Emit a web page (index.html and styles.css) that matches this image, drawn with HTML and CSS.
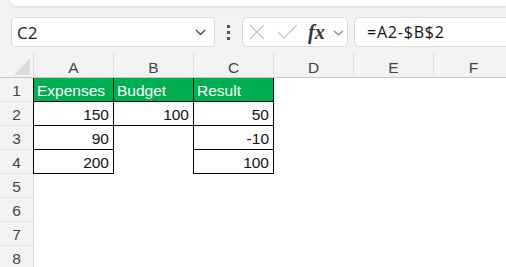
FILE: index.html
```html
<!DOCTYPE html>
<html lang="en">
<head>
  <meta charset="UTF-8" />
  <title>Book1 - Excel</title>
  <link rel="stylesheet" href="styles.css">
</head>
<body>

  <!-- Ribbon edge -->
  <div class="ribbon-edge"></div>

  <!-- Formula bar -->
  <div class="formula-bar">
    <div class="name-box">
      <span>C2</span>
      <svg class="chev" width="11" height="7" viewBox="0 0 11 7"><path d="M1 1 L5.5 5.5 L10 1" fill="none" stroke="#444" stroke-width="1.3"/></svg>
    </div>
    <div class="grip"><i></i><i></i><i></i></div>
    <div class="fx-box">
      <svg class="cancel" width="16" height="16" viewBox="0 0 16 16"><path d="M1 1 L15 15 M15 1 L1 15" stroke="#c4c4c4" stroke-width="1.2"/></svg>
      <svg class="enter" width="21" height="16" viewBox="0 0 21 16"><path d="M1 8 L7 14 L20 1" fill="none" stroke="#c4c4c4" stroke-width="1.2"/></svg>
      <span class="fx">fx</span>
      <svg class="chev-sm" width="11" height="6" viewBox="0 0 11 6"><path d="M1 1 L5.5 5 L10 1" fill="none" stroke="#888" stroke-width="1.1"/></svg>
    </div>
    <div class="formula-input">=A2-$B$2</div>
  </div>

  <!-- Sheet grid -->
  <div class="sheet">
    <div class="corner"><svg width="16" height="17" viewBox="0 0 16 17"><path d="M16 0 L16 17 L0 17 Z" fill="#dcdcdc"/></svg></div>
    <div class="col-head">A</div>
    <div class="col-head">B</div>
    <div class="col-head">C</div>
    <div class="col-head">D</div>
    <div class="col-head">E</div>
    <div class="col-head">F</div>

    <div class="row-head">1</div>
    <div class="cell box edge title">Expenses</div>
    <div class="cell box title">Budget</div>
    <div class="cell box edge title">Result</div>
    <div class="cell"></div><div class="cell"></div><div class="cell"></div>

    <div class="row-head">2</div>
    <div class="cell box edge num">150</div>
    <div class="cell box num">100</div>
    <div class="cell box edge num">50</div>
    <div class="cell"></div><div class="cell"></div><div class="cell"></div>

    <div class="row-head">3</div>
    <div class="cell box edge num">90</div>
    <div class="cell"></div>
    <div class="cell box edge num">-10</div>
    <div class="cell"></div><div class="cell"></div><div class="cell"></div>

    <div class="row-head">4</div>
    <div class="cell box edge num">200</div>
    <div class="cell"></div>
    <div class="cell box edge num">100</div>
    <div class="cell"></div><div class="cell"></div><div class="cell"></div>

    <div class="row-head">5</div>
    <div class="cell"></div><div class="cell"></div><div class="cell"></div><div class="cell"></div><div class="cell"></div><div class="cell"></div>
    <div class="row-head">6</div>
    <div class="cell"></div><div class="cell"></div><div class="cell"></div><div class="cell"></div><div class="cell"></div><div class="cell"></div>
    <div class="row-head">7</div>
    <div class="cell"></div><div class="cell"></div><div class="cell"></div><div class="cell"></div><div class="cell"></div><div class="cell"></div>
    <div class="row-head">8</div>
    <div class="cell"></div><div class="cell"></div><div class="cell"></div><div class="cell"></div><div class="cell"></div><div class="cell"></div>
  </div>

</body>
</html>
```

FILE: styles.css
```css
body {
  margin: 0; background: #f3f3f3; overflow: hidden;
  font-family: "Liberation Sans", Arial, sans-serif; color: #111;
}

.ribbon-edge {
  height: 6px; margin-left: 10px; background: #fff;
  border-bottom-left-radius: 8px;
  box-shadow: 0 1px 3px rgba(0,0,0,0.12);
}

/* formula bar */
.formula-bar {
  display: flex; align-items: center;
  height: 30px; margin: 11px 0 0 11px;
}
.name-box {
  box-sizing: border-box; width: 204px; height: 30px;
  display: flex; align-items: center; justify-content: space-between;
  padding: 0 8px 0 5px;
  background: #fff; border: 1px solid #dadada; border-radius: 5px;
  font-family: "Open Sans", sans-serif; font-size: 17px; color: #1a1a1a;
}
.name-box .chev { margin-top: 1px; }
.grip {
  width: 27px; display: flex; flex-direction: column; align-items: center; gap: 3px;
}
.grip i { display: block; width: 3px; height: 3px; background: #555; }
.fx-box {
  box-sizing: border-box; width: 106px; height: 30px;
  display: flex; align-items: center; padding-left: 6px;
  background: #fff; border: 1px solid #dadada; border-radius: 5px;
}
.fx-box .enter { margin-left: 12px; }
.fx-box .fx {
  margin-left: 10px; width: 20px;
  font-family: "Liberation Serif", serif; font-style: italic; font-weight: bold;
  font-size: 20px; color: #333; line-height: 1;
}
.fx-box .chev-sm { margin-left: 5px; margin-top: 2px; }
.formula-input {
  box-sizing: border-box; flex: 1; height: 30px; margin: 0 -10px 0 6px;
  display: flex; align-items: center; padding-left: 12px;
  background: #fff; border: 1px solid #dadada; border-radius: 5px;
  font-family: "Open Sans", sans-serif; font-size: 16px; letter-spacing: 0.8px; color: #111;
}

/* sheet */
.sheet {
  margin-top: 6px;
  display: grid;
  grid-template-columns: 34px repeat(6, 80px);
  grid-template-rows: 25px repeat(8, 24px);
  font-size: 15.5px;
}
.corner {
  border-right: 1px solid #dcdcdc; border-bottom: 1px solid #c6c6c6;
  display: flex; align-items: flex-end; justify-content: flex-end;
  padding: 0 3px 2px 0;
}
.col-head {
  display: flex; align-items: flex-end; justify-content: center;
  border-right: 1px solid #e0e0e0; border-bottom: 1px solid #c6c6c6;
  color: #444;
}
.row-head {
  display: flex; align-items: flex-end; justify-content: center;
  border-right: 1px solid #d2d2d2; border-bottom: 1px solid #e2e2e2;
  color: #444; padding-bottom: 1px;
}
.cell {
  background: #fff; display: flex; align-items: flex-end;
  padding: 0 4px 1px 3px; white-space: nowrap;
}
.cell.box { border-right: 1px solid #000; border-bottom: 1px solid #000; }
.cell.edge { box-shadow: -1px 0 0 #000; }
.cell.title { background: #00b050; color: #fff; }
.cell.num { justify-content: flex-end; }
```
